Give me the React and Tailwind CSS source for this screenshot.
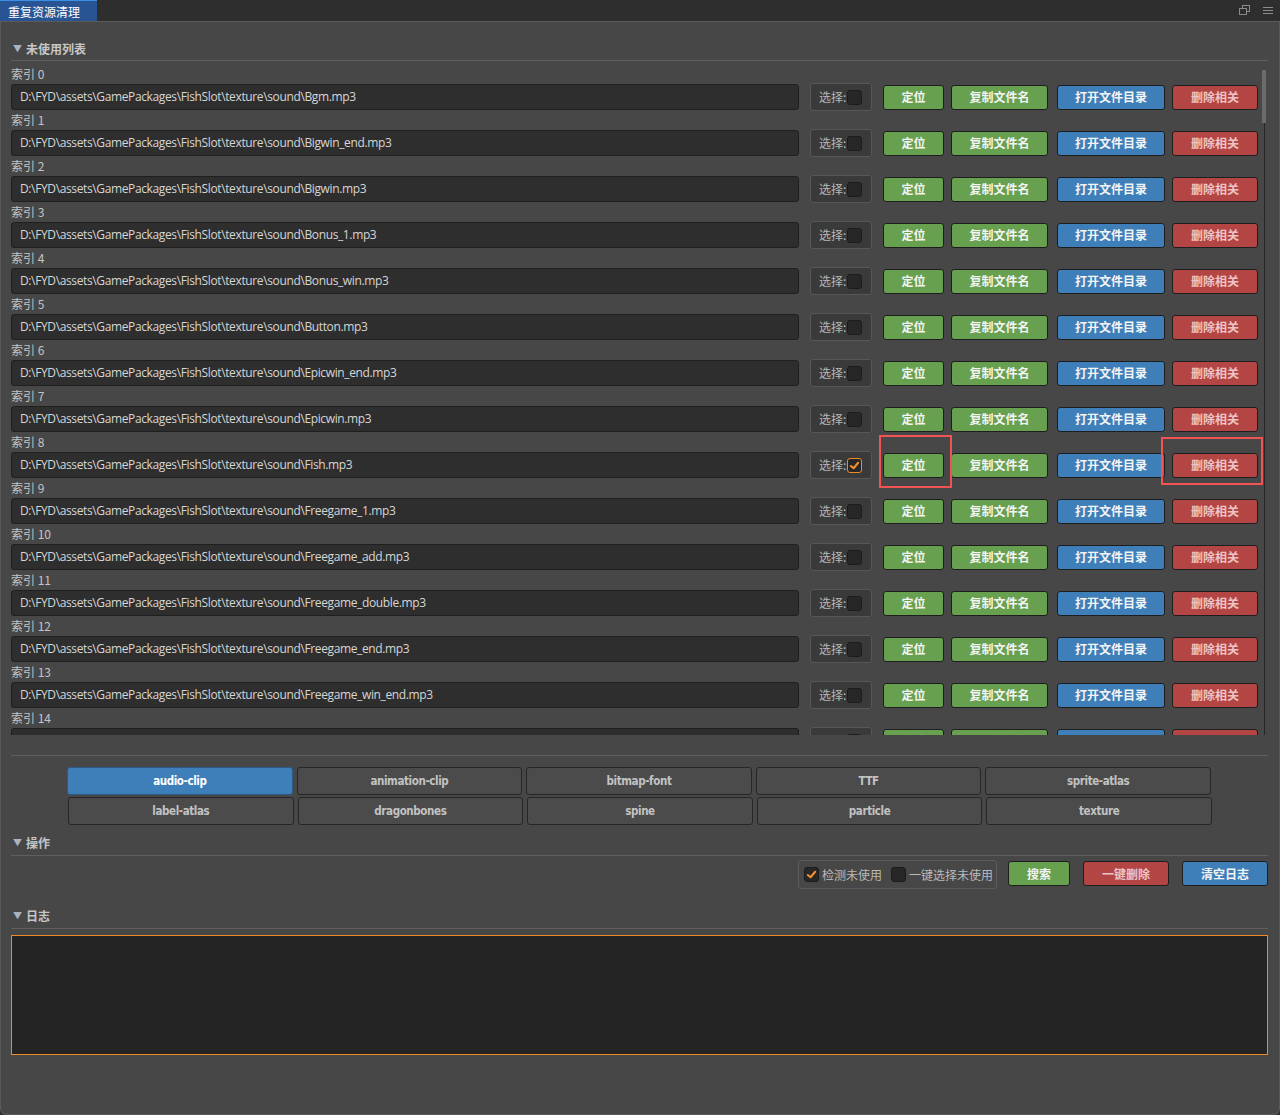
import React, { useState } from "react";

const files = [
  "Bgm.mp3",
  "Bigwin_end.mp3",
  "Bigwin.mp3",
  "Bonus_1.mp3",
  "Bonus_win.mp3",
  "Button.mp3",
  "Epicwin_end.mp3",
  "Epicwin.mp3",
  "Fish.mp3",
  "Freegame_1.mp3",
  "Freegame_add.mp3",
  "Freegame_double.mp3",
  "Freegame_end.mp3",
  "Freegame_win_end.mp3",
  "Freegame_win.mp3",
];

const tabs = [
  "audio-clip",
  "animation-clip",
  "bitmap-font",
  "TTF",
  "sprite-atlas",
  "label-atlas",
  "dragonbones",
  "spine",
  "particle",
  "texture",
];

const cjk = "font-['Microsoft_YaHei','Noto_Sans_CJK_SC',sans-serif]";

const Check = ({ checked, orange }) => (
  <span
    className={`w-[15px] h-[15px] rounded-[3px] flex items-center justify-center bg-[#272727] border ${
      orange ? "border-[#f08a24]" : "border-[#1c1c1c]"
    }`}
  >
    {checked && (
      <svg width="11" height="11" viewBox="0 0 12 12">
        <polyline points="2,6.5 5,9 10,3" fill="none" stroke="#f5902a" strokeWidth="2.2" strokeLinecap="round" strokeLinejoin="round" />
      </svg>
    )}
  </span>
);

const SectionHeader = ({ title, h, pb }) => (
  <div className={`${h} ${pb} flex items-end border-b border-[#5f5f5f]`}>
    <div className={`flex items-center gap-[4px] pl-[2px] text-[12px] leading-[16px] font-bold text-[#c6c6c6] ${cjk}`}>
      <span className="text-[9px] text-[#a9b4c0]">▼</span>
      <span>{title}</span>
    </div>
  </div>
);

const Btn = ({ color, w, h = "h-[25px]", text, textColor = "text-[#f4f4f4]" }) => (
  <button
    className={`${w} ${h} ${color} ${textColor} ${cjk} shrink-0 rounded-[3px] border border-[#1e1e1e] text-[12px] font-bold flex items-center justify-center`}
  >
    {text}
  </button>
);

const App = () => {
  const [active, setActive] = useState(0);

  return (
    <div className="w-[1280px] h-[1115px] bg-[#2b2b2b] flex flex-col overflow-hidden">
      {/* title bar */}
      <div className="h-[22px] shrink-0 bg-[#2e2e2e] border-b border-[#5a5a5a] flex items-stretch">
        <div className={`w-[97px] bg-[#285494] border-t border-[#3b8fe4] text-white text-[12px] leading-[21px] pl-[8px] ${cjk}`}>
          重复资源清理
        </div>
        <div className="flex-1" />
        <div className="flex items-center gap-[13px] pr-[7px]">
          <svg width="11" height="11" viewBox="0 0 11 11">
            <rect x="3.5" y="0.5" width="7" height="6" fill="none" stroke="#8a8a8a" />
            <rect x="0.5" y="3.5" width="7" height="6" fill="#2e2e2e" stroke="#8a8a8a" />
          </svg>
          <svg width="10" height="9" viewBox="0 0 10 9">
            <rect x="0" y="1" width="10" height="1" fill="#8c8c8c" />
            <rect x="0" y="4" width="10" height="1" fill="#8c8c8c" />
            <rect x="0" y="7" width="10" height="1" fill="#8c8c8c" />
          </svg>
        </div>
      </div>

      {/* main panel */}
      <div className="flex-1 bg-[#474747] border-x border-b border-[#585858] rounded-b-[6px] pl-[10px] pr-[11px] relative">
        <SectionHeader title="未使用列表" h="h-[39px]" pb="pb-[3px]" />

        <div className="relative h-[674px] overflow-hidden pt-[3px] pr-[10px]">
          {files.map((f, i) => (
            <div key={i}>
              <div className={`h-[20px] leading-[20px] text-[12px] text-[#c4c4c4] ${cjk}`}>索引 {i}</div>
              <div className="h-[26px] flex items-center">
                <div className="flex-1 h-[26px] bg-[#2e2e2e] border border-[#1f1f1f] rounded-[3px] pl-[8px] flex items-center text-[12px] text-[#d6d6d6] font-['Open_Sans',sans-serif] tracking-[-0.37px]">
                  D:\FYD\assets\GamePackages\FishSlot\texture\sound\{f}
                </div>
                <div className="ml-[11px] w-[62px] h-[28px] shrink-0 bg-[#3a3a3a] border border-[#575757] rounded-[3px] flex items-center pl-[8px] gap-[1px]">
                  <span className={`text-[12px] text-[#b6b6b6] ${cjk}`}>选择:</span>
                  <Check checked={i === 8} orange={i === 8} />
                </div>
                <div className="ml-[11px]">
                  <Btn color="bg-[#67a04e]" w="w-[61px]" text="定位" />
                </div>
                <div className="ml-[7px]">
                  <Btn color="bg-[#67a04e]" w="w-[97px]" text="复制文件名" />
                </div>
                <div className="ml-[9px]">
                  <Btn color="bg-[#3f7fb9]" w="w-[108px]" text="打开文件目录" />
                </div>
                <div className="ml-[7px]">
                  <Btn color="bg-[#b44545]" w="w-[86px]" text="删除相关" textColor="text-[#ecc4c4]" />
                </div>
              </div>
            </div>
          ))}
          {/* scrollbar */}
          <div className="absolute right-[2px] top-[9px] w-[4px] h-[53px] bg-[#6b6b6b]" />
          <div className="absolute right-[3px] top-[62px] w-[1px] h-[620px] bg-[#262626]" />
        </div>

        <div className="mt-[20px] border-t border-[#5f5f5f]" />

        {/* type tabs */}
        <div className="mt-[11px] ml-[56px] w-[1144px] grid grid-cols-5 gap-x-[4px] gap-y-[2px]">
          {tabs.map((t, i) => (
            <button
              key={t}
              onClick={() => setActive(i)}
              className={`h-[28px] pt-[2px] rounded-[3px] border text-[11.5px] tracking-[-0.4px] font-bold font-['Liberation_Sans_Narrow','DejaVu_Sans_Condensed',sans-serif] ${
                i >= 5 ? "translate-x-[1px]" : ""
              } ${
                active === i
                  ? "bg-[#3f7fb9] border-[#2a5a85] text-white"
                  : "bg-[#4b4b4b] border-[#262626] text-[#c2c2c2]"
              }`}
            >
              {t}
            </button>
          ))}
        </div>

        <SectionHeader title="操作" h="h-[31px]" pb="pb-[4px]" />

        <div className="mt-[4px] flex items-start justify-end">
          <div className={`h-[29px] w-[199px] border border-[#5c5c5c] rounded-[3px] flex items-center pl-[5px] gap-[3px] text-[12px] text-[#bababa] ${cjk}`}>
            <Check checked />
            <span>检测未使用</span>
            <span className="ml-[3px]" />
            <Check />
            <span>一键选择未使用</span>
          </div>
          <div className="ml-[11px] mt-[1px]">
            <Btn color="bg-[#67a04e]" w="w-[62px]" h="h-[25px]" text="搜索" />
          </div>
          <div className="ml-[13px] mt-[1px]">
            <Btn color="bg-[#b44545]" w="w-[86px]" h="h-[25px]" text="一键删除" textColor="text-[#ecc4c4]" />
          </div>
          <div className="ml-[13px] mt-[1px]">
            <Btn color="bg-[#3f7fb9]" w="w-[86px]" h="h-[25px]" text="清空日志" />
          </div>
        </div>

        <SectionHeader title="日志" h="h-[40px]" pb="pb-[4px]" />

        <div className="mt-[6px] h-[120px] bg-[#242424] border border-[#f0892a]" />

        {/* highlight annotations */}
        <div className="absolute left-[878px] top-[413px] w-[73px] h-[53px] border-2 border-[#f25353]" />
        <div className="absolute left-[1160px] top-[415px] w-[102px] h-[48px] border-2 border-[#f25353]" />
      </div>
    </div>
  );
};

export default App;
